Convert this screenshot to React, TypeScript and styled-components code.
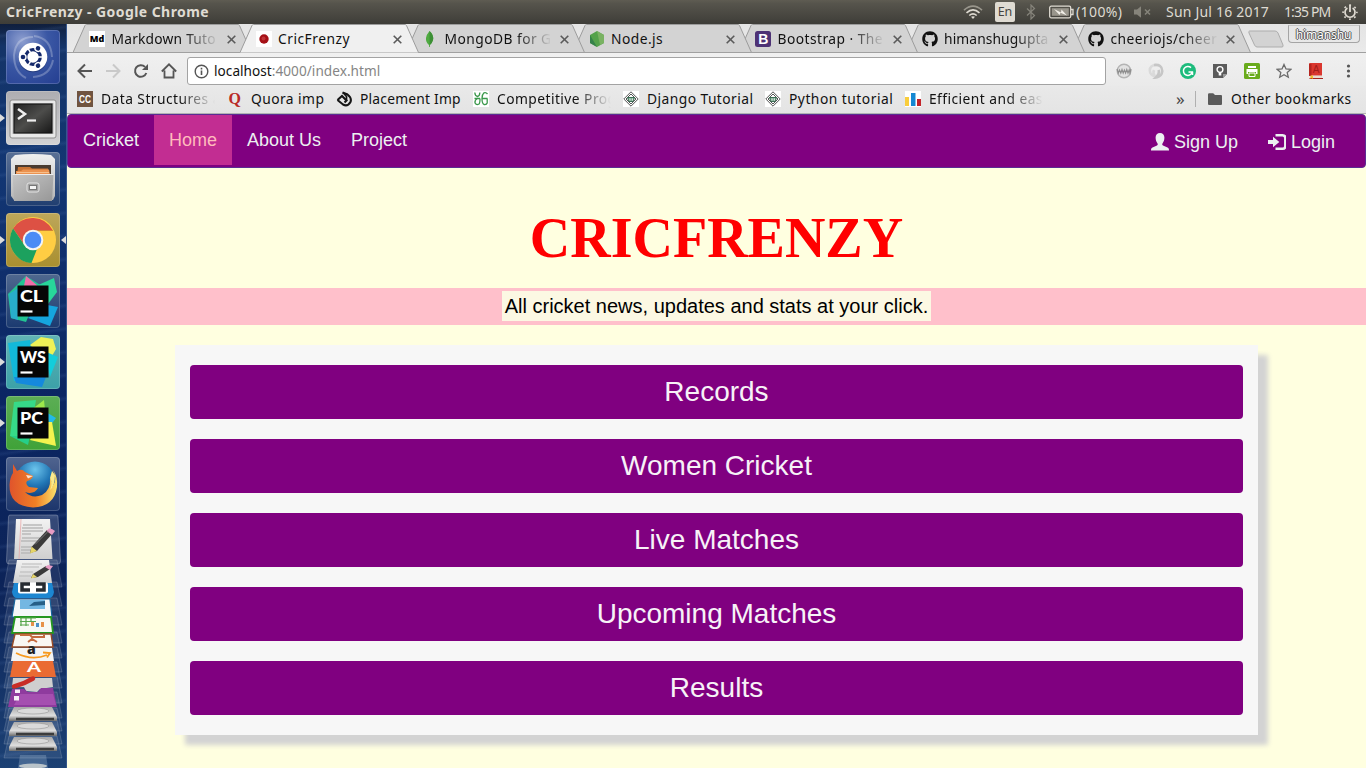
import React from "react";
import styled, { createGlobalStyle, css } from "styled-components";
import { FaGithub } from "react-icons/fa";

const UI = `"Noto Sans", "Open Sans", sans-serif`;
const PAGE = `"Liberation Sans", Arial, sans-serif`;

const GlobalStyle = createGlobalStyle`
  *, *::before, *::after { box-sizing: border-box; }
  html, body { margin: 0; padding: 0; }
  body { width: 1366px; height: 768px; overflow: hidden; font-family: ${PAGE}; }
  svg { display: block; flex: none; }
`;

const Desktop = styled.div`
  width: 1366px;
  height: 768px;
  display: flex;
  flex-direction: column;
  overflow: hidden;
`;

/* ---------- system bar ---------- */

const SystemBar = styled.header`
  height: 24px;
  flex: none;
  display: flex;
  align-items: center;
  padding: 0 8px 0 6px;
  background: linear-gradient(#5f5c52 0, #56544c 15%, #3e3d38 100%);
  color: #dfdbd2;
  font: 14px/24px ${UI};
`;

const WindowTitle = styled.strong`
  flex: 1;
  font-size: 14px;
  font-weight: 700;
  letter-spacing: 0.43px;
  white-space: pre;
`;

const Indicator = styled.div<{ $gap: number }>`
  margin-left: ${(p) => p.$gap}px;
  display: flex;
  align-items: center;
  white-space: pre;
`;

const Clock = styled.span<{ $width: number; $spacing?: number }>`
  width: ${(p) => p.$width}px;
  flex: none;
  letter-spacing: ${(p) => p.$spacing ?? 0}px;
  white-space: pre;
`;

const LangBadge = styled.span`
  width: 20px;
  height: 20px;
  border-radius: 2px;
  background: #dfdbd2;
  color: #45443e;
  text-align: center;
  font: 12.5px/20px ${UI};
`;

/* ---------- launcher ---------- */

const Workspace = styled.div`
  flex: 1;
  display: flex;
  min-height: 0;
`;

const Launcher = styled.nav`
  width: 67px;
  flex: none;
  display: flex;
  flex-direction: column;
  align-items: center;
  gap: 7px;
  padding-top: 6px;
  overflow: hidden;
  border-right: 1px solid #35568c;
  background:
    repeating-linear-gradient(172deg, rgba(120, 160, 220, 0) 0 9px, rgba(120, 160, 220, 0.1) 12px, rgba(120, 160, 220, 0) 15px 23px),
    linear-gradient(#101f3d 0, #143468 3%, #123673 20%, #0b2663 50%, #0c2358 75%, #1c4174 100%);
`;

const Tile = styled.div<{ $bg: string; $running?: boolean; $focused?: boolean }>`
  position: relative;
  width: 54px;
  height: 54px;
  flex: none;
  display: flex;
  align-items: center;
  justify-content: center;
  border-radius: 4px;
  background: ${(p) => p.$bg};
  box-shadow: inset 0 0 0 1px rgba(255, 255, 255, 0.18);
  ${(p) =>
    p.$running &&
    css`
      &::before {
        content: "";
        position: absolute;
        left: -6px;
        top: 23px;
        border: 4px solid transparent;
        border-left: 5px solid #dcdcdc;
        border-right: 0;
      }
    `}
  ${(p) =>
    p.$focused &&
    css`
      &::after {
        content: "";
        position: absolute;
        right: -6px;
        top: 23px;
        border: 4px solid transparent;
        border-right: 5px solid #dcdcdc;
        border-left: 0;
      }
    `}
`;

const FoldedStackSlot = styled.div`
  flex: none;
  margin-top: -10px;
  height: 260px;
`;

/* ---------- browser chrome ---------- */

const Browser = styled.section`
  flex: 1;
  min-width: 0;
  display: flex;
  flex-direction: column;
`;

const TabStrip = styled.div`
  height: 29px;
  flex: none;
  display: flex;
  padding-left: 6px;
  background: linear-gradient(#e4e4e4, #eaeaea);
  border-bottom: 1px solid #a0a0a0;
`;

const TabBox = styled.div<{ $z: number }>`
  position: relative;
  z-index: ${(p) => p.$z};
  width: 178.5px;
  height: 29px;
  flex: none;
  margin-right: -12px;
  display: flex;
  align-items: center;
  padding: 1px 0 0 16px;
  font: 13.8px/28px ${UI};
  color: #111;
`;

const TabShape = styled.svg`
  position: absolute;
  left: 0;
  top: 0;
  z-index: -1;
`;

const fade = css`
  mask-image: linear-gradient(90deg, #000 calc(100% - 36px), transparent);
`;

const TabLabel = styled.span<{ $fade?: boolean; $spacing?: number }>`
  width: 107px;
  margin: 0 8px 0 6.5px;
  flex: none;
  overflow: hidden;
  white-space: pre;
  letter-spacing: ${(p) => p.$spacing ?? 0.45}px;
  ${(p) => p.$fade && fade}
`;

const Favicon = styled.span<{ $bg?: string }>`
  width: 16px;
  height: 16px;
  flex: none;
  display: grid;
  place-items: center;
  background: ${(p) => p.$bg ?? "transparent"};
  color: #111;
`;

const MdBadge = styled.b`
  font: 900 9px/16px ${UI};
  color: #000;
`;

const NewTab = styled.svg`
  margin: 6px 0 0 -2px;
`;

const UserButton = styled.div`
  width: 72px;
  height: 18px;
  margin: 1px 0 0 3px;
  border: 1px solid #a5a5a5;
  border-top-color: #c5c5c5;
  border-radius: 0 0 4px 4px;
  text-align: center;
  font: 12px/17px ${UI};
  letter-spacing: -0.1px;
  color: #fff;
  text-shadow: 1px 0 #555, -1px 0 #555, 0 1px #555, 0 -1px #555;
`;

const Toolbar = styled.div`
  height: 33px;
  flex: none;
  display: flex;
  align-items: center;
  padding: 3px 0 0 10px;
  background: linear-gradient(#f0f0f0, #eaeaea);
`;

const NavIcons = styled.div`
  display: flex;
  gap: 12px;
  width: 110px;
`;

const Omnibox = styled.div`
  width: 919px;
  height: 28px;
  display: flex;
  align-items: center;
  padding-left: 6px;
  border: 1px solid #a3a3a3;
  border-radius: 3px;
  background: #fff;
  color: #858585;
  font: 13.6px/26px ${UI};
`;

const Address = styled.span`
  margin-left: 5px;
  letter-spacing: 0.04px;
  b { font-weight: 400; color: #111; }
`;

const Extensions = styled.div`
  display: flex;
  gap: 16px;
  margin-left: 10px;
`;

const Bookmarks = styled.div`
  height: 28px;
  flex: none;
  display: flex;
  align-items: center;
  padding: 0 0 2px 10px;
  background: linear-gradient(#e9e9e9, #e4e4e4);
  border-bottom: 1px solid #b2b2b2;
  font: 13.8px/24px ${UI};
  color: #111;
`;

const Bookmark = styled.div<{ $width: number; $fade?: boolean; $spacing?: number }>`
  width: ${(p) => p.$width}px;
  flex: none;
  display: flex;
  align-items: center;
  gap: 8px;
  span:last-child {
    flex: 1;
    overflow: hidden;
    margin-right: ${(p) => (p.$fade ? 12 : 4)}px;
    white-space: pre;
    letter-spacing: ${(p) => p.$spacing ?? 0.45}px;
    ${(p) => p.$fade && fade}
  }
`;

const OtherBookmarks = styled.div`
  margin-left: 11px;
  display: flex;
  align-items: center;
  gap: 8px;
  white-space: pre;
`;

const Chevrons = styled.span`
  width: 15px;
  margin-left: auto;
  font-size: 17px;
  color: #444;
`;

const Divider = styled.i`
  width: 1px;
  height: 16px;
  margin-left: 4px;
  background: #b0b0b0;
`;

/* ---------- web page ---------- */

const Page = styled.main`
  flex: 1;
  min-height: 0;
  overflow: hidden;
  background: #ffffe0;
`;

const Navbar = styled.nav`
  height: 54px;
  display: flex;
  justify-content: space-between;
  border: 1px solid #5b2c94;
  border-radius: 4px;
  background: #800080;
`;

const NavGroup = styled.div<{ $offset?: number }>`
  display: flex;
  padding: ${(p) => p.$offset ?? 0}px ${(p) => (p.$offset ? 15 : 0)}px 0 0;
`;

const NavLink = styled.a<{ $active?: boolean }>`
  height: 50px;
  padding: 0 15px;
  display: flex;
  align-items: center;
  gap: 5px;
  font-size: 18px;
  line-height: 50px;
  color: ${(p) => (p.$active ? "#ffbbbc" : "#ecf0f1")};
  background: ${(p) => (p.$active ? "#c22d92" : "transparent")};
`;

const Heading = styled.h1`
  margin: 39px 0 0;
  height: 81px;
  text-align: center;
  font: 700 56px/62px "Liberation Serif", "Times New Roman", serif;
  color: #f00;
`;

const Band = styled.div`
  height: 37px;
  display: flex;
  justify-content: center;
  align-items: flex-start;
  padding-top: 3px;
  background: #ffc0cb;
`;

const Tagline = styled.mark`
  height: 30px;
  padding: 0 3px;
  background: #fcf8e3;
  color: #000;
  font-size: 20px;
  line-height: 30px;
`;

const Panel = styled.section`
  width: 1082.5px;
  height: 390px;
  margin: 20px auto 0;
  padding: 20px 15px;
  display: flex;
  flex-direction: column;
  gap: 20px;
  background: #f7f7f7;
  box-shadow: 10px 10px 5px lightgray;
`;

const MenuButton = styled.a`
  height: 54px;
  border-radius: 4px;
  background: #800080;
  color: #f7f2f7;
  text-align: center;
  font-size: 28px;
  line-height: 54px;
`;

/* ---------- drawings ---------- */

const Wifi = () => (
  <svg width="20" height="16" viewBox="0 0 20 16" fill="none" stroke="#dfdbd2" strokeWidth="1.6">
    <path d="M1 6.2Q10-1.8 19 6.2" stroke="#99968c" />
    <path d="M3.5 8.8Q10 3 16.500 8.800" />
    <path d="M6.300 11.500Q10 8.300 13.700 11.500" />
    <path d="M8 12.800L10 15L12 12.800Q10 11.500 8 12.800Z" fill="#dfdbd2" stroke="none" />
  </svg>
);

const Bluetooth = () => (
  <svg width="10" height="16" viewBox="0 0 10 16" fill="none" stroke="#86847b" strokeWidth="1.200">
    <path d="M1 4.500L8.500 11.500L5 15V1L8.500 4.500L1 11.500" />
  </svg>
);

const Battery = () => (
  <svg width="25" height="14" viewBox="0 0 25 14">
    <rect x=".7" y="1.200" width="21" height="11.600" rx="1.500" fill="none" stroke="#dfdbd2" strokeWidth="1.300" />
    <rect x="2.800" y="3.200" width="17" height="7.600" fill="#99968c" />
    <path d="M22 4.500h2v5h-2" fill="none" stroke="#dfdbd2" strokeWidth="1.300" />
    <path d="M5 4L12 7.500L12.500 4.500L18 10.500L11.500 7.800L10.500 10Z" fill="#f1eee7" />
  </svg>
);

const Muted = () => (
  <svg width="18" height="14" viewBox="0 0 18 14" stroke="#86847b" strokeWidth="1.500">
    <path d="M0 4.500h3L7 1.200v11.600L3 9.500H0Z" fill="#86847b" stroke="none" />
    <path d="M11 4.500l5 5M16 4.500l-5 5" />
  </svg>
);

const PowerGear = () => (
  <svg width="16" height="16" viewBox="0 0 16 16" fill="none" stroke="#dfdbd2">
    <circle cx="8" cy="8.300" r="6.900" strokeWidth="1.600" strokeDasharray="1.800 3.619" strokeDashoffset=".9" />
    <path d="M5.400 4A5 5 0 1 0 10.600 4" strokeWidth="1.700" />
    <path d="M8 .5v7.500" strokeWidth="1.800" />
  </svg>
);

const UbuntuArt = () => (
  <svg width="54" height="54" viewBox="0 0 54 54">
    <path d="M27 7Q10 7 8 25Q8 42 20 48M46 27Q45 8 28 6M27 47Q44 46 47 30" fill="none" stroke="rgba(255,255,255,.25)" strokeWidth="2" />
    <circle cx="27" cy="28" r="14.300" fill="#0f235c" opacity=".5" />
    <circle cx="27" cy="27" r="14.300" fill="#fff" />
    <circle cx="27" cy="27" r="7.300" fill="none" stroke="#14296b" strokeWidth="3.200" />
    {[60, 180, 300].map((angle) => (
      <g key={angle} transform={`rotate(${angle} 27 27)`}>
        <circle cx="36.800" cy="27" r="3.500" fill="#fff" />
        <circle cx="37" cy="27" r="2.300" fill="#14296b" />
        <path d="M17 27H22" stroke="#fff" strokeWidth="1.500" />
      </g>
    ))}
  </svg>
);

const TerminalArt = () => (
  <svg width="50" height="44" viewBox="0 0 50 44">
    <defs>
      <linearGradient id="screen" x1="0" y1="0" x2="1" y2="1">
        <stop offset="0" stopColor="#222" /><stop offset=".5" stopColor="#4d4d4b" /><stop offset="1" stopColor="#171717" />
      </linearGradient>
    </defs>
    <rect x="2" y="4" width="46" height="38" rx="2" fill="#e8e8e8" stroke="#8d8d8d" />
    <rect x="4.500" y="7" width="41" height="31" fill="#b5b5b5" />
    <rect x="6" y="8" width="38" height="29" fill="url(#screen)" stroke="#111" />
    <path d="M10 13l7 5-7 5" fill="none" stroke="#eee" strokeWidth="2.500" />
    <path d="M19 24.500h9" stroke="#eee" strokeWidth="2.200" />
  </svg>
);

const FilesArt = () => (
  <svg width="48" height="50" viewBox="0 0 48 50">
    <defs>
      <linearGradient id="cab" x1="0" y1="0" x2="0" y2="1">
        <stop offset="0" stopColor="#f0f0f0" /><stop offset="1" stopColor="#b5b5b5" />
      </linearGradient>
      <linearGradient id="drawer" x1="0" y1="0" x2="1" y2="1">
        <stop offset="0" stopColor="#c6c6c6" /><stop offset="1" stopColor="#979797" />
      </linearGradient>
    </defs>
    <path d="M6 1Q24-1 42 1L46 5V42L44 46H5L2 42V5Z" fill="url(#cab)" />
    <path d="M6 11H42V22H6Z" fill="#4a3b30" />
    <path d="M9 13H21L23 14.500H39V21H8Z" fill="#c97434" />
    <path d="M7 17H12L14 15.500H40L41 21H7Z" fill="#eb9250" />
    <path d="M8 18.500H40" stroke="#f7c08c" />
    <path d="M3.500 20H44.500L43 47H5Z" fill="url(#drawer)" />
    <path d="M3.500 20.500H44.500" stroke="#ececec" />
    <rect x="18" y="29" width="12" height="9" rx="2" fill="#a3a3a3" stroke="#e4e4e4" />
    <rect x="20.500" y="31.500" width="7" height="4" fill="#f4f4f4" stroke="#777" />
  </svg>
);

const ChromeArt = () => (
  <svg width="48" height="48" viewBox="0 0 48 48">
    <circle cx="24" cy="24" r="23" fill="#ffcd43" />
    <path d="M4.100 12.500A23 23 0 0 1 43.900 14.500H24A10 10 0 0 0 14.800 28Z" fill="#dd5144" />
    <path d="M4.100 12.500L15.400 29A10 10 0 0 0 28 33L22.500 47A23 23 0 0 1 4.100 12.500Z" fill="#1ca15e" />
    <path d="M24 14.500h20" stroke="#c5782d" strokeWidth=".6" />
    <circle cx="24" cy="24" r="10.300" fill="#f4f4f4" />
    <circle cx="24" cy="24" r="8.300" fill="#4c8bf5" />
  </svg>
);

type ShardProps = { label: string; shapes: { d: string; c: string }[] };

const JetbrainsArt = ({ label, shapes }: ShardProps) => (
  <svg width="54" height="54" viewBox="0 0 54 54">
    {shapes.map((s) => (
      <path key={s.d} d={s.d} fill={s.c} />
    ))}
    <rect x="11.500" y="11.500" width="31" height="31" fill="#060606" />
    <text x="14" y="28" fontFamily="Lato, sans-serif" fontWeight="900" fontSize="17.500" textLength={label === "WS" ? 26 : 23} lengthAdjust="spacingAndGlyphs" fill="#fff">
      {label}
    </text>
    <path d="M14.500 37.500h12" stroke="#fff" strokeWidth="2.200" />
  </svg>
);

const clion = [
  { d: "M2 20L20 2L36 12L20 48L5 44Z", c: "#22c493" },
  { d: "M20 2L32 12H18Z", c: "#f06ea9" },
  { d: "M30 12L48 4L51 18L42 30Z", c: "#28d69a" },
  { d: "M36 30L52 33L44 52L22 44Z", c: "#15a5de" },
  { d: "M3 20L12 14V46L5 44Z", c: "#28aecb" },
];
const webstorm = [
  { d: "M2 8L24 5L30 48L8 46Z", c: "#12b9da" },
  { d: "M24 10L35 2L47 4L50 14L42 28Z", c: "#eef257" },
  { d: "M38 16L52 22L44 42Z", c: "#13cddb" },
  { d: "M8 42H40L36 52L10 48Z", c: "#1589dd" },
];
const pycharm = [
  { d: "M8 6L30 4L24 40L4 40Z", c: "#36da88" },
  { d: "M25 14L38 4L40 24Z", c: "#9ce84b" },
  { d: "M40 16L50 22L44 30Z", c: "#22b9e8" },
  { d: "M34 26H46L50 50L24 44Z", c: "#f3f34f" },
  { d: "M4 40L24 40L22 49Z", c: "#26cf88" },
];

const FirefoxArt = () => (
  <svg width="50" height="50" viewBox="0 0 50 50">
    <defs>
      <radialGradient id="globe" cx=".5" cy=".2" r=".8">
        <stop offset="0" stopColor="#6cc4ec" /><stop offset=".5" stopColor="#2176b5" /><stop offset="1" stopColor="#0d2d6b" />
      </radialGradient>
      <linearGradient id="fox" x1="0" y1="0" x2="1" y2="0">
        <stop offset="0" stopColor="#e0542c" /><stop offset=".55" stopColor="#ef7f25" /><stop offset="1" stopColor="#fbe36c" />
      </linearGradient>
    </defs>
    <circle cx="27" cy="22.500" r="20" fill="url(#globe)" />
    <path d="M5 5L9 12Q14 9 17 13L25 17Q24 21 19 22Q17 25 21 28L30 29Q26 36 17 33Q24 40 34 36Q43 31 42 19Q45 23 44 28Q50 21 45 11Q50 18 49 28Q46 48 25 48.500Q1 47 1.500 26Q2 18 5 14Z" fill="url(#fox)" />
    <path d="M42 19Q45 24 42 31Q47 27 47 16L44 12Z" fill="#fce98a" />
    <path d="M18 16l7 1-5 2.500Z" fill="#fbe3d2" />
  </svg>
);

const frames = [[52, 79], [74, 98], [90, 117], [108, 135], [124, 150], [139, 164], [154, 180], [168, 195], [184, 210], [200, 223], [212, 236], [228, 250]];

const FoldedStack = () => (
  <svg width="66" height="260" viewBox="0 0 66 260">
    <defs>
      <linearGradient id="paper" x1="0" y1="0" x2="0" y2="1">
        <stop offset="0" stopColor="#f2f2f2" /><stop offset="1" stopColor="#cfcfcf" />
      </linearGradient>
      <linearGradient id="disk" x1="0" y1="0" x2="0" y2="1">
        <stop offset="0" stopColor="#a9a9a9" /><stop offset=".6" stopColor="#dedede" /><stop offset="1" stopColor="#6d6d6d" />
      </linearGradient>
    </defs>
    <path d="M10 7H56Q58 7 58 9L60.500 53Q60.500 56 58 56H9Q6.500 56 6.500 53L8.500 9Q8.500 7 10 7Z" fill="rgba(255,255,255,.17)" stroke="rgba(255,255,255,.25)" />
    <path d="M16 11H50L52.500 51H14Z" fill="url(#paper)" />
    <path d="M23 17H42M22 20H43M22 23H43M22 26H31M22 30H40M21 33H38M21 39H34M21 42H32M21 45H31" stroke="#b9b9b9" strokeWidth="1.400" />
    <path d="M21 11L19 51" stroke="#e8a2a2" strokeWidth=".7" />
    <path d="M31.500 39L47 22L52 26L37 43L30 45Z" fill="#3a3a3a" />
    <path d="M31.500 38.500L37 43L30 45.500Z" fill="#e6d568" />
    <path d="M46.500 23L49 20.500Q52 20 55 23L52 27Z" fill="#e79cc4" />
    <path d="M35 36.500L48 23.500" stroke="#777" />

    {frames.map(([top, bottom]) => (
      <path key={top} d={`M9 ${top}H57L62 ${bottom}H4Z`} fill="rgba(255,255,255,.08)" stroke="rgba(255,255,255,.2)" strokeWidth=".8" />
    ))}

    <path d="M17 52H49L52 75H13Z" fill="url(#paper)" />
    <path d="M22 56H42M21 59H39M20 64H33M19 68H31" stroke="#b9b9b9" />
    <path d="M33 66L46 58L50 61L38 69L31 70Z" fill="#3a3a3a" />
    <path d="M33 66L37 69L31 70.500Z" fill="#e6d568" />
    <path d="M45 59L48 57L53 58L50 62Z" fill="#e79cc4" />
    <path d="M14 75H52L54 84Q53 90 49 90H17Q13 90 12 84Z" fill="#1c86d1" />
    <rect x="18" y="74.500" width="30" height="11" rx="2" fill="#fff" />
    <path d="M30 76H22V82H30M36 76H44V82H36" fill="none" stroke="#262b31" strokeWidth="3.500" />
    <path d="M15 91H50L52 109H12Z" fill="#f4f7f9" stroke="#16639c" strokeWidth="1.200" />
    <path d="M20 92H45V101H20Z" fill="#73b7e2" /><path d="M29 98L34 94L45 93V97Z" fill="#265f87" />
    <path d="M15 109H51L53 125H12Z" fill="#f7f9f4" stroke="#249720" strokeWidth="1.800" />
    <path d="M20 110H36M20 113.500H36M20 117H29M21 110V118M26 110V118M31 110V114" stroke="#57a64d" strokeWidth="1.200" />
    <path d="M32.500 118V114M42.500 119V114" stroke="#e79148" strokeWidth="3" />
    <path d="M37.500 119V115" stroke="#4d91c8" strokeWidth="3" />
    <path d="M15 126H51L53 139H12Z" fill="#f9f6f3" stroke="#984a26" strokeWidth="1.400" />
    <path d="M20 127H30L32 129H44V127M28 134L32 131L37 134" stroke="#c56a40" strokeWidth="2" fill="none" />
    <path d="M13 140H52L54 153H11Z" fill="#f4f4f4" />
    <text x="27" y="145.500" fontFamily="Open Sans, sans-serif" fontWeight="800" fontSize="14" fill="#222">a</text>
    <path d="M16 145Q32 153 47 147M43 144.500L50 145L47 149.500" stroke="#f79a20" strokeWidth="1.800" fill="none" />
    <path d="M13 153H53L56 169H10Z" fill="#ea6b33" />
    <text x="27" y="164" fontFamily="Lato, sans-serif" fontWeight="900" fontSize="13" textLength="14" lengthAdjust="spacingAndGlyphs" fill="#fff">A</text>
    <path d="M13 170H52L53 179L40 181L37 184L26 183L24 179H12Z" fill="#cfcfcf" />
    <path d="M14 178.500Q24 176 33 170.500" stroke="#c82d26" strokeWidth="4.500" fill="none" strokeLinecap="round" />
    <path d="M12 181H24L28 184H38L41 180H53L57 199H8Z" fill="#8f3b9e" /><path d="M20 186H53L56 197H14Z" fill="#b45dbd" opacity=".6" />
    <path d="M15 181.500H20V185H15ZM14 188H19V192.500H14Z" fill="#f6eef6" />
    {[199, 214, 229].map((y) => (
      <g key={y}>
        <path d={`M14 ${y}H52L57 ${y + 10}V${y + 14}H9V${y + 10}Z`} fill="url(#disk)" />
        <ellipse cx="33" cy={y + 4} rx="16" ry="3" fill="#dadada" stroke="#999" strokeWidth=".6" />
        <path d={`M16 ${y + 12}H54`} stroke="#3c3c3c" strokeWidth="2.500" />
      </g>
    ))}
    <path d="M20 247H46L48 260H18Z" fill="rgba(190,215,235,.25)" />
    <ellipse cx="33" cy="258" rx="14" ry="2.500" fill="#b9c3c9" />
  </svg>
);

const LeafIcon = () => (
  <svg width="16" height="16" viewBox="0 0 16 16">
    <path d="M7.500 0Q12 4 11 9Q10 12.500 8 14V16H7.200L7 14Q3.500 11 4 7Q4.500 3.500 7.500 0Z" fill="#4faa41" />
    <path d="M7.500 0Q12 4 11 9Q10 12.500 7.700 14Z" fill="#3c8f35" />
  </svg>
);

const NodeIcon = () => (
  <svg width="16" height="16" viewBox="0 0 16 16">
    <path d="M8 0L15 4V12L8 16L1 12V4Z" fill="#54a24b" />
    <path d="M8 0L15 4V12L11 14Z" fill="#79b262" />
    <path d="M1 4L8 16L1 12Z" fill="#35814a" />
  </svg>
);

const BootstrapIcon = () => (
  <svg width="16" height="16" viewBox="0 0 16 16">
    <rect width="16" height="16" rx="2.500" fill="#4d3275" />
    <text x="3.300" y="13" fontFamily="Liberation Sans, Arial, sans-serif" fontWeight="700" fontSize="14" fill="#fff">B</text>
  </svg>
);

const BallIcon = () => (
  <svg width="16" height="16" viewBox="0 0 16 16">
    <circle cx="8" cy="8" r="4.700" fill="#a51016" /><circle cx="7.500" cy="7.500" r="2" fill="#bf3438" />
  </svg>
);

const CloseIcon = () => (
  <svg width="9" height="9" viewBox="0 0 9 9" stroke="#5a5a5a" strokeWidth="1.600">
    <path d="M.7.7l7.600 7.600M8.300.7l-7.600 7.600" />
  </svg>
);

const BackIcon = ({ forward }: { forward?: boolean }) => (
  <svg width="16" height="16" viewBox="0 0 16 16" fill="none" stroke={forward ? "#c9c9c9" : "#555"} strokeWidth="2">
    {forward ? <path d="M1 8h13M8 1.500L14.500 8L8 14.500" /> : <path d="M15 8H2M8 1.500L1.500 8L8 14.500" />}
  </svg>
);

const ReloadIcon = () => (
  <svg width="16" height="16" viewBox="0 0 16 16">
    <path d="M13.300 10A5.800 5.800 0 1 1 12 3.900" fill="none" stroke="#555" strokeWidth="2" />
    <path d="M15 1V7H9Z" fill="#555" />
  </svg>
);

const HomeIcon = () => (
  <svg width="16" height="16" viewBox="0 0 16 16" fill="none" stroke="#555" strokeWidth="1.800">
    <path d="M.8 8.500L8 1.300L15.200 8.500M3.500 7.500V14.500H12.500V7.500" />
  </svg>
);

const InfoIcon = () => (
  <svg width="15" height="15" viewBox="0 0 15 15" fill="none" stroke="#555" strokeWidth="1.400">
    <circle cx="7.500" cy="7.500" r="6.300" /><path d="M7.500 6.500V11M7.500 3.800V5.400" strokeWidth="1.600" />
  </svg>
);

const WwwExt = () => (
  <svg width="16" height="16" viewBox="0 0 16 16">
    <circle cx="8" cy="8" r="6.800" fill="#e2e2e2" stroke="#b4b4b4" strokeWidth="1.400" />
    <path d="M1 6L2.300 10L3.500 7L4.800 10L6 6.500L7.200 10L8.400 7L9.600 10L10.800 6.500L12 10L13.200 7L14 10L15 6" fill="none" stroke="#8f8f8f" strokeWidth="1.200" />
  </svg>
);
const SwirlExt = () => (
  <svg width="16" height="16" viewBox="0 0 16 16" fill="none" strokeWidth="2.600">
    <path d="M8 2Q2 2 1.800 7.500Q2 12 7 13.500Q4.500 10 6 7" stroke="#dadada" />
    <path d="M6 2Q14 1 14.300 8Q14 13.500 8 14.500Q12 11 10.500 7" stroke="#c6c6c6" />
  </svg>
);
const GrammarExt = () => (
  <svg width="16" height="16" viewBox="0 0 16 16">
    <circle cx="8" cy="8" r="8" fill="#1dbb7c" />
    <path d="M11 4.600A4.500 4.500 0 1 0 12.300 9H8.500M12.500 9V12" fill="none" stroke="#fff" strokeWidth="1.500" />
  </svg>
);
const KeepExt = () => (
  <svg width="16" height="16" viewBox="0 0 16 16">
    <path d="M1 1H15V11L11 15H1Z" fill="#5b5b5b" /><path d="M11 15V11H15Z" fill="#9b9b9b" />
    <circle cx="8" cy="6.500" r="2.900" fill="none" stroke="#fff" strokeWidth="1.400" />
    <path d="M6.700 9V12.500H9.300V9" fill="#fff" />
  </svg>
);
const PrintExt = () => (
  <svg width="16" height="16" viewBox="0 0 16 16">
    <rect width="16" height="16" rx="1.500" fill="#69ab1c" />
    <path d="M4 3h8v2H4ZM2.500 6h11v5H12V9H4v2H2.500Z" fill="#fff" /><path d="M5 10h6v3.500H5Z" fill="none" stroke="#fff" />
  </svg>
);
const StarExt = () => (
  <svg width="16" height="16" viewBox="0 0 16 16" fill="none" stroke="#6a6a6a" strokeWidth="1.300">
    <path d="M8 1.500L10 6L14.800 6.400L11.200 9.600L12.300 14.300L8 11.800L3.700 14.300L4.800 9.600L1.200 6.400L6 6Z" />
  </svg>
);
const DictExt = () => (
  <svg width="16" height="16" viewBox="0 0 16 16">
    <path d="M1 1Q1 0 2 0H14V12.500H1Z" fill="#da372f" /><path d="M1 1H3.500V13H1Z" fill="#b5251f" />
    <path d="M2 13H14V15.500H3Q1 15 2 13Z" fill="#e8dccf" /><path d="M1.500 15.500H15" stroke="#a62420" />
    <path d="M2.500 12.500H5V16L3.800 15L2.500 16Z" fill="#f2c02e" />
    <text x="4.700" y="10" fontFamily="Liberation Sans, sans-serif" fontSize="10" fill="#a31d1a">A</text>
  </svg>
);
const MenuDots = () => (
  <svg width="16" height="16" viewBox="0 0 16 16" fill="#555">
    <circle cx="8.500" cy="3" r="1.600" /><circle cx="8.500" cy="8" r="1.600" /><circle cx="8.500" cy="13" r="1.600" />
  </svg>
);

const CcIcon = () => (
  <svg width="16" height="16" viewBox="0 0 16 16">
    <rect width="16" height="16" fill="#705440" />
    <text x="2" y="11.500" fontFamily="Liberation Sans, sans-serif" fontWeight="700" fontSize="10.500" textLength="12" lengthAdjust="spacingAndGlyphs" fill="#fff">CC</text>
  </svg>
);
const QuoraIcon = () => (
  <svg width="16" height="16" viewBox="0 0 16 16">
    <text x="1.500" y="12.500" fontFamily="Liberation Serif, serif" fontWeight="700" fontSize="16" fill="#b92b27">Q</text>
  </svg>
);
const PlacementIcon = () => (
  <svg width="18" height="16" viewBox="0 0 18 16" fill="none" stroke="#161616" strokeWidth="2.100">
    <path d="M1.500 9L6 5L10.500 9.500L8.500 11.500" />
    <path d="M6.500 1.500L11.500 3.500Q16 7 14.500 11Q11.500 16 7 13.500L1.500 9" />
    <path d="M7 1.500L10.500 5.500V9.500" strokeWidth="1.700" />
  </svg>
);
const GeeksIcon = () => (
  <svg width="16" height="16" viewBox="0 0 16 16" fill="none" stroke="#3b984b" strokeWidth="1.300">
    <path d="M1.800 1.500Q2 5 4.500 5.500Q6.800 5 6.800 1.500M7 7.500H1.500M4.500 7.500Q1.500 9 2 12Q3.500 14.500 6 13Q7 12 7 7.500" />
    <path d="M14.500 3Q13 1 11 1.800Q9 3.500 9 7.500H14.500M9 7.500Q9 12.500 11 13.500Q13.500 14 14.200 12V7.500" />
  </svg>
);
const DiamondIcon = () => (
  <svg width="16" height="16" viewBox="0 0 16 16" fill="none" stroke="#555">
    <path d="M8 .8L15.200 8L8 15.200L.8 8ZM8 3L13 8L8 13L3 8Z" />
    <path d="M4.500 6.500H11.500L10 10.500H6Z" fill="#6ca184" stroke="#3c6e55" />
    <path d="M7 7.300V9.700M9.300 7.300V9.700" stroke="#f3f3f3" />
  </svg>
);
const BarsIcon = () => (
  <svg width="16" height="16" viewBox="0 0 16 16">
    <path d="M0 6H4V15H0Z" fill="#f9cd3c" /><path d="M6 2H10.500V15H6Z" fill="#1688d2" /><path d="M12 8H16V15H12Z" fill="#c3242b" />
  </svg>
);
const FolderIcon = () => (
  <svg width="16" height="16" viewBox="0 0 16 16">
    <path d="M1 3.500Q1 2.200 2.200 2.200H6.200L8 4H14Q15 4 15 5V12.800Q15 14 14 14H2Q1 14 1 12.800Z" fill="#5a5a5a" />
  </svg>
);

const UserGlyph = () => (
  <svg width="18" height="18" viewBox="0 0 18 18" fill="#ecf0f1">
    <path d="M9 0C11.700 0 13.400 1.800 13.400 4.600C13.400 7 12.700 8.800 11.600 10.200C11 11 11.100 12 12 12.400L16.500 14.400C17.600 15 18 15.500 18 17.500H0C0 15.500.4 15 1.500 14.400L6 12.400C6.900 12 7 11 6.400 10.200C5.300 8.800 4.600 7 4.600 4.600C4.600 1.800 6.300 0 9 0Z" />
  </svg>
);
const LoginGlyph = () => (
  <svg width="18" height="18" viewBox="0 0 18 18" fill="none">
    <path d="M7.500 2.200H14.500Q17.300 2.200 17.300 5V13Q17.300 15.800 14.500 15.800H7.500" stroke="#ecf0f1" strokeWidth="2.500" />
    <path d="M0 7H5V3.700L11.300 9L5 14.300V11H0Z" fill="#ecf0f1" />
  </svg>
);

/* ---------- data ---------- */

type TabData = { label: string; icon: React.ReactNode; bg?: string; fade?: boolean; spacing?: number; active?: boolean };

const tabs: TabData[] = [
  { label: "Markdown Tuto", icon: <MdBadge>Md</MdBadge>, bg: "#fff", fade: true, spacing: 0.2 },
  { label: "CricFrenzy", icon: <BallIcon />, bg: "#fff", active: true, spacing: 0.5 },
  { label: "MongoDB for G", icon: <LeafIcon />, fade: true },
  { label: "Node.js", icon: <NodeIcon /> },
  { label: "Bootstrap · The", icon: <BootstrapIcon />, fade: true },
  { label: "himanshugupta", icon: <FaGithub size={16} />, fade: true, spacing: 0.1 },
  { label: "cheeriojs/cheeri", icon: <FaGithub size={16} />, fade: true },
];

const bookmarks = [
  { label: "Data Structures a", icon: <CcIcon />, width: 150, fade: true },
  { label: "Quora imp", icon: <QuoraIcon />, width: 109 },
  { label: "Placement Imp", icon: <PlacementIcon />, width: 137, spacing: 0.22 },
  { label: "Competitive Prog", icon: <GeeksIcon />, width: 150, fade: true, bg: "#fff" },
  { label: "Django Tutorial", icon: <DiamondIcon />, width: 142, bg: "#fff" },
  { label: "Python tutorial", icon: <DiamondIcon />, width: 140, bg: "#fff", spacing: 0.5 },
  { label: "Efficient and easy", icon: <BarsIcon />, width: 150, fade: true, bg: "#fff" },
];

const menu = ["Records", "Women Cricket", "Live Matches", "Upcoming Matches", "Results"];

const Tab = ({ tab, order }: { tab: TabData; order: number }) => (
  <TabBox $z={tab.active ? 20 : 10 - order}>
    <TabShape width="179" height="29" viewBox="0 0 179 29">
      <path
        d="M0 28.500L12 1.500Q12.500.5 13.500.5H165Q166 .5 166.500 1.500L178.500 28.500"
        fill={tab.active ? "#f0f0f0" : "#d3d3d3"}
        stroke="#9c9c9c"
      />
      {!tab.active && <path d="M0 28.500H179" stroke="#a0a0a0" />}
    </TabShape>
    <Favicon $bg={tab.bg}>{tab.icon}</Favicon>
    <TabLabel $fade={tab.fade} $spacing={tab.spacing}>{tab.label}</TabLabel>
    <CloseIcon />
  </TabBox>
);

export default function App() {
  return (
    <Desktop>
      <GlobalStyle />
      <SystemBar>
        <WindowTitle>CricFrenzy - Google Chrome</WindowTitle>
        <Indicator $gap={0}><Wifi /></Indicator>
        <Indicator $gap={12}><LangBadge>En</LangBadge></Indicator>
        <Indicator $gap={11}><Bluetooth /></Indicator>
        <Indicator $gap={13}><Battery /></Indicator>
        <Indicator $gap={2}><Clock $width={57} $spacing={0.4}>(100%)</Clock></Indicator>
        <Indicator $gap={1}><Muted /></Indicator>
        <Indicator $gap={14}><Clock $width={118} $spacing={0.2}>Sun Jul 16 2017</Clock><Clock $width={46} $spacing={-0.9}>1:35 PM</Clock></Indicator>
        <Indicator $gap={12}><PowerGear /></Indicator>
      </SystemBar>
      <Workspace>
        <Launcher>
          <Tile $bg="radial-gradient(circle at 30% 20%, #8e9fd0 0, #3a57a4 45%, #243e91 100%)"><UbuntuArt /></Tile>
          <Tile $bg="linear-gradient(#adadb1, #d2d2d4)" $running><TerminalArt /></Tile>
          <Tile $bg="linear-gradient(#5a7095, #203e70)"><FilesArt /></Tile>
          <Tile $bg="linear-gradient(#bda75a, #a98f2f)" $running $focused><ChromeArt /></Tile>
          <Tile $bg="linear-gradient(#4f688f, #1b3a70)"><JetbrainsArt label="CL" shapes={clion} /></Tile>
          <Tile $bg="linear-gradient(#61b4b5, #3ba1a8)" $running><JetbrainsArt label="WS" shapes={webstorm} /></Tile>
          <Tile $bg="linear-gradient(#5cae55, #3fa238)" $running><JetbrainsArt label="PC" shapes={pycharm} /></Tile>
          <Tile $bg="linear-gradient(#50648f, #1c356b)"><FirefoxArt /></Tile>
          <FoldedStackSlot><FoldedStack /></FoldedStackSlot>
        </Launcher>
        <Browser>
          <TabStrip>
            {tabs.map((tab, i) => (
              <Tab key={tab.label} tab={tab} order={i} />
            ))}
            <NewTab width="48" height="18" viewBox="0 0 48 18">
              <path d="M12.500 1H38Q40 1 41 3L46 15Q46.500 17 45 17H20Q18.500 17 17.500 15L12 3Q11.500 1 12.500 1Z" fill="#d3d3d3" stroke="#adadad" />
            </NewTab>
            <UserButton>himanshu</UserButton>
          </TabStrip>
          <Toolbar>
            <NavIcons><BackIcon /><BackIcon forward /><ReloadIcon /><HomeIcon /></NavIcons>
            <Omnibox><InfoIcon /><Address><b>localhost</b>:4000/index.html</Address></Omnibox>
            <Extensions><WwwExt /><SwirlExt /><GrammarExt /><KeepExt /><PrintExt /><StarExt /><DictExt /><MenuDots /></Extensions>
          </Toolbar>
          <Bookmarks>
            {bookmarks.map((b) => (
              <Bookmark key={b.label} $width={b.width} $fade={b.fade} $spacing={b.spacing}>
                <Favicon $bg={b.bg}>{b.icon}</Favicon>
                <span>{b.label}</span>
              </Bookmark>
            ))}
            <Chevrons>»</Chevrons>
            <Divider />
            <OtherBookmarks><FolderIcon /><Clock $width={135} $spacing={0.43}>Other bookmarks</Clock></OtherBookmarks>
          </Bookmarks>
          <Page>
            <Navbar>
              <NavGroup>
                <NavLink>Cricket</NavLink>
                <NavLink $active>Home</NavLink>
                <NavLink>About Us</NavLink>
                <NavLink>Project</NavLink>
              </NavGroup>
              <NavGroup $offset={2}>
                <NavLink><UserGlyph />Sign Up</NavLink>
                <NavLink><LoginGlyph />Login</NavLink>
              </NavGroup>
            </Navbar>
            <Heading>CRICFRENZY</Heading>
            <Band><Tagline>All cricket news, updates and stats at your click.</Tagline></Band>
            <Panel>
              {menu.map((item) => (
                <MenuButton key={item}>{item}</MenuButton>
              ))}
            </Panel>
          </Page>
        </Browser>
      </Workspace>
    </Desktop>
  );
}
